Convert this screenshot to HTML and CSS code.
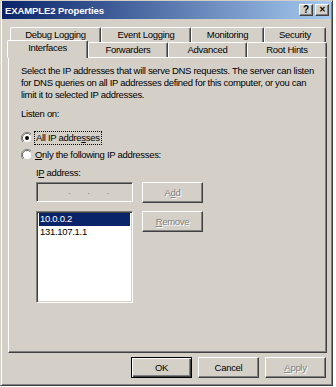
FILE: index.html
```html
<!DOCTYPE html>
<html lang="en">
<head>
    <meta charset="UTF-8">
    <title>EXAMPLE2 Properties</title>
    <link rel="stylesheet" href="styles.css">
</head>
<body>

    <div class="dialog">
        <div class="titlebar">
            <span class="caption">EXAMPLE2 Properties</span>
            <div class="caption-buttons">
                <span class="cbtn">?</span>
                <span class="cbtn close">&#x2715;</span>
            </div>
        </div>

        <div class="content">
            <div class="tab-row back">
                <div class="tab" style="width: 91px;">Debug Logging</div>
                <div class="tab" style="width: 90px;">Event Logging</div>
                <div class="tab" style="width: 73px;">Monitoring</div>
                <div class="tab" style="width: 62px;">Security</div>
            </div>
            <div class="tab-row front">
                <div class="tab selected" style="width: 81px;">Interfaces</div>
                <div class="tab" style="width: 80px;">Forwarders</div>
                <div class="tab" style="width: 79px;">Advanced</div>
                <div class="tab" style="width: 80px;">Root Hints</div>
            </div>

            <div class="panel">
                <p class="intro">Select the IP addresses that will serve DNS requests. The server can listen for DNS queries on all IP addresses defined for this computer, or you can limit it to selected IP addresses.</p>

                <div class="label">Listen on:</div>

                <div class="radio-row first">
                    <svg class="radio" width="12" height="12" viewBox="0 0 12 12">
                        <path d="M10 2 A5.5 5.5 0 0 0 2 10" fill="none" stroke="#808080"/>
                        <path d="M9 3 A4.2 4.2 0 0 0 3 9" fill="none" stroke="#404040"/>
                        <circle cx="6" cy="6" r="4" fill="#fff"/>
                        <circle cx="6" cy="6" r="2" fill="#000"/>
                    </svg>
                    <span class="focus">All IP addre<u>s</u>ses</span>
                </div>

                <div class="radio-row">
                    <svg class="radio" width="12" height="12" viewBox="0 0 12 12">
                        <path d="M10 2 A5.5 5.5 0 0 0 2 10" fill="none" stroke="#808080"/>
                        <path d="M9 3 A4.2 4.2 0 0 0 3 9" fill="none" stroke="#404040"/>
                        <circle cx="6" cy="6" r="4" fill="#fff"/>
                    </svg>
                    <span><u>O</u>nly the following IP addresses:</span>
                </div>

                <div class="ip-group">
                    <div class="label">I<u>P</u> address:</div>
                    <div class="ip-grid">
                        <div class="ip-input">
                            <span>.</span><span>.</span><span>.</span>
                        </div>
                        <button class="btn disabled">A<u>d</u>d</button>
                        <div class="listbox">
                            <div class="item selected">10.0.0.2</div>
                            <div class="item">131.107.1.1</div>
                        </div>
                        <button class="btn disabled"><u>R</u>emove</button>
                    </div>
                </div>
            </div>

            <div class="footer">
                <button class="btn default">OK</button>
                <button class="btn">Cancel</button>
                <button class="btn disabled"><u>A</u>pply</button>
            </div>
        </div>
    </div>

</body>
</html>
```

FILE: styles.css
```css
:root {
    --face-color: #d4d0c8;
    --shadow-color: #808080;
    --dark-shadow-color: #404040;
    --highlight-color: #ffffff;
    --select-color: #0a246a;
}

body {
    margin: 0;
    background-color: #ffffff;
    font-family: 'Liberation Sans', Arial, sans-serif;
    font-size: 9.5px;
    letter-spacing: -0.3px;
    color: #000;
}

u {
    text-decoration: underline;
    text-underline-offset: 1px;
}

.dialog {
    width: 333px;
    height: 386px;
    box-sizing: border-box;
    background-color: var(--face-color);
    border: 1px solid;
    border-color: var(--face-color) var(--dark-shadow-color) var(--dark-shadow-color) var(--face-color);
    box-shadow: inset 1px 1px var(--highlight-color), inset -1px -1px var(--shadow-color);
    padding: 0 1px;
}

.titlebar {
    height: 18px;
    background: linear-gradient(to right, var(--select-color), #a6caf0);
    display: flex;
    align-items: center;
    justify-content: space-between;
    padding: 0 2px 0 3px;
}

.caption {
    color: #fff;
    font-weight: bold;
    font-size: 9.5px;
    letter-spacing: -0.1px;
}

.caption-buttons {
    display: flex;
    gap: 2px;
}

.cbtn {
    width: 14px;
    height: 12px;
    box-sizing: border-box;
    background-color: var(--face-color);
    border: 1px solid;
    border-color: var(--highlight-color) var(--dark-shadow-color) var(--dark-shadow-color) var(--highlight-color);
    box-shadow: inset -1px -1px var(--shadow-color);
    font-size: 10px;
    font-weight: bold;
    line-height: 10px;
    letter-spacing: 0;
    text-align: center;
}

.cbtn.close {
    font-size: 8px;
}

.content {
    padding: 8px 0 0 6px;
}

.tab-row {
    display: flex;
    height: 15px;
    align-items: flex-end;
}

.tab-row.back {
    margin-left: 2px;
}

.tab-row.front {
    margin-left: -1px;
}

.tab {
    height: 15px;
    box-sizing: border-box;
    background-color: var(--face-color);
    border-left: 1px solid var(--highlight-color);
    border-top: 1px solid var(--highlight-color);
    border-right: 1px solid var(--dark-shadow-color);
    box-shadow: inset -1px 0 var(--shadow-color);
    border-radius: 2px 2px 0 0;
    text-align: center;
    line-height: 13px;
    white-space: nowrap;
}

.tab.selected {
    height: 18px;
    margin-bottom: -1px;
    position: relative;
    z-index: 1;
    line-height: 13px;
}

.panel {
    width: 319px;
    height: 296px;
    box-sizing: border-box;
    border: 1px solid;
    border-color: var(--highlight-color) var(--dark-shadow-color) var(--dark-shadow-color) var(--highlight-color);
    box-shadow: inset -1px -1px var(--shadow-color);
    padding: 7px 12px 0 12px;
    line-height: 12px;
}

.intro {
    margin: 0 0 7px 0;
}

.label {
    height: 12px;
}

.radio-row {
    display: flex;
    align-items: center;
    height: 13px;
    margin-top: 4px;
}

.radio-row.first {
    margin-top: 11px;
}

.radio {
    margin: 0 2px 0 0;
    flex: none;
}

.focus {
    outline: 1px dotted #000;
    outline-offset: 0;
    padding: 0 1px;
}

.ip-group {
    margin: 6px 0 0 15px;
}

.ip-grid {
    display: grid;
    grid-template-columns: 97px 61px;
    column-gap: 9px;
    row-gap: 8px;
    margin-top: 3px;
    align-items: start;
}

.ip-input {
    height: 20px;
    box-sizing: border-box;
    border: 1px solid;
    border-color: var(--shadow-color) var(--highlight-color) var(--highlight-color) var(--shadow-color);
    box-shadow: inset 1px 1px var(--dark-shadow-color), inset -1px -1px var(--face-color);
    display: flex;
    justify-content: space-evenly;
    padding: 0 6px 0 14px;
    line-height: 15px;
    color: var(--shadow-color);
}

.listbox {
    height: 92px;
    box-sizing: border-box;
    background-color: #fff;
    border: 1px solid;
    border-color: var(--shadow-color) var(--highlight-color) var(--highlight-color) var(--shadow-color);
    box-shadow: inset 1px 1px var(--dark-shadow-color), inset -1px -1px var(--face-color);
    padding: 1px 2px;
}

.item {
    height: 13px;
    line-height: 12px;
    padding-left: 1px;
}

.item.selected {
    background-color: var(--select-color);
    color: #fff;
}

.btn {
    width: 61px;
    height: 21px;
    box-sizing: border-box;
    background-color: var(--face-color);
    border: 1px solid;
    border-color: var(--highlight-color) var(--dark-shadow-color) var(--dark-shadow-color) var(--highlight-color);
    box-shadow: inset -1px -1px var(--shadow-color);
    font-family: inherit;
    font-size: 9.5px;
    letter-spacing: -0.3px;
    color: #000;
    padding: 0;
}

.btn.disabled {
    color: var(--shadow-color);
    text-shadow: 1px 1px var(--highlight-color);
}

.btn.default {
    border: 1px solid #000;
    box-shadow: inset 1px 1px var(--highlight-color), inset -1px -1px var(--dark-shadow-color), inset -2px -2px var(--shadow-color);
}

.footer {
    width: 319px;
    box-sizing: border-box;
    display: flex;
    justify-content: flex-end;
    gap: 6px;
    margin-top: 4px;
    padding-right: 1px;
}
```
